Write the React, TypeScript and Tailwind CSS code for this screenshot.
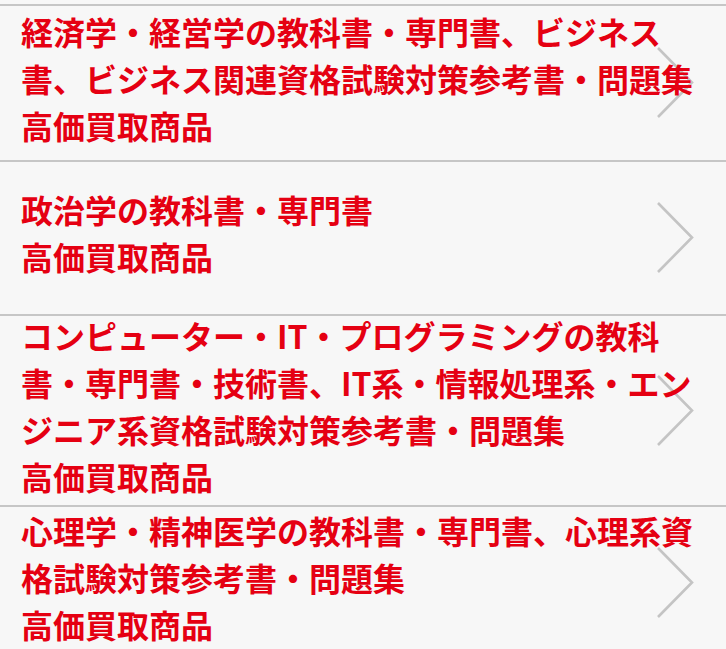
import React from "react";

const rows: { text: string[]; h: string }[] = [
  {
    text: ["経済学・経営学の教科書・専門書、ビジネス書、ビジネス関連資格試験対策参考書・問題集", "高価買取商品"],
    h: "h-[156px]",
  },
  { text: ["政治学の教科書・専門書", "高価買取商品"], h: "h-[154px]" },
  {
    text: [
      "コンピューター・IT・プログラミングの教科書・専門書・技術書、IT系・情報処理系・エンジニア系資格試験対策参考書・問題集",
      "高価買取商品",
    ],
    h: "h-[191px]",
  },
  {
    text: ["心理学・精神医学の教科書・専門書、心理系資格試験対策参考書・問題集", "高価買取商品"],
    h: "h-[153px]",
  },
];

function Chevron() {
  return (
    <svg
      className="absolute right-[30px] top-1/2 -translate-y-1/2"
      width="40"
      height="74"
      viewBox="0 0 40 74"
      fill="none"
    >
      <polyline points="2,2 36,36.5 2,71" stroke="#c4c4c4" strokeWidth="2.6" />
    </svg>
  );
}

export default function App() {
  return (
    <div
      className="min-h-[649px] w-full bg-[#f7f7f7] pt-[4px] overflow-hidden"
      style={{ fontFamily: '"Noto Sans CJK JP", "Noto Sans", sans-serif' }}
    >
      {rows.map((r, i) => (
        <a
          key={i}
          href="#"
          className={`relative flex items-center border-t-2 border-[#c6c6c6] pl-[21px] pr-[20px] pb-[10px] ${r.h}`}
        >
          <Chevron />
          <div className="relative text-[32px] leading-[47px] font-bold text-[#e50012]">
            {r.text.map((t, j) => (
              <div key={j}>{t}</div>
            ))}
          </div>
        </a>
      ))}
    </div>
  );
}
